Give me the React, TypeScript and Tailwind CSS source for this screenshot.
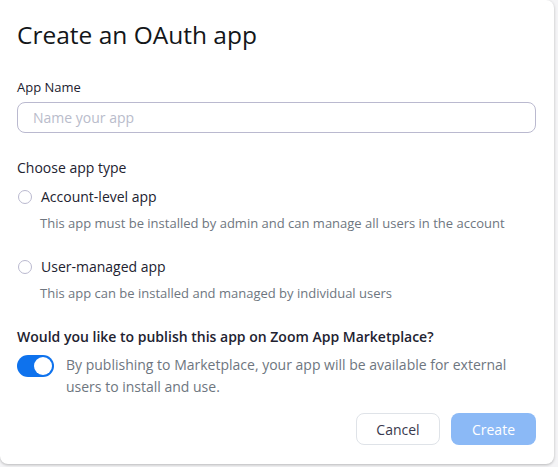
import React from "react";

export default function App() {
  return (
    <div className="w-[558px] h-[467px] bg-[#f4f4f6] overflow-hidden" style={{ fontFamily: '"Open Sans", "Noto Sans", sans-serif' }}>
      <div className="w-[554px] h-[464px] bg-white rounded-tr-lg rounded-b-lg shadow-[0_1px_3px_rgba(0,0,0,0.25)] pl-[17px] pr-[18px] pt-[18px] flex flex-col">
        <h1 className="text-[24.5px] leading-[34px] text-[#131619] font-normal">Create an OAuth app</h1>
        <div className="mt-[26px] text-[13px] leading-[18px] text-[#222230] font-medium">App Name</div>
        <div className="mt-[6px] h-[31px] border border-[#bab9cf] rounded-lg flex items-center px-[15px]">
          <span className="text-[14px] text-[#b9bccb]">Name your app</span>
        </div>
        <div className="mt-[25px] text-[14px] leading-[20px] text-[#222230]">Choose app type</div>
        <div className="mt-[9px] flex items-center gap-[9px]">
          <span className="w-[14px] h-[14px] rounded-full border border-[#bab9cf] ml-[1px]"></span>
          <span className="text-[14px] leading-[20px] text-[#222230]">Account-level app</span>
        </div>
        <div className="mt-[6px] ml-[23px] text-[13px] leading-[20px] text-[#6e7680]">This app must be installed by admin and can manage all users in the account</div>
        <div className="mt-[24px] flex items-center gap-[9px]">
          <span className="w-[14px] h-[14px] rounded-full border border-[#bab9cf] ml-[1px]"></span>
          <span className="text-[14px] leading-[20px] text-[#222230]">User-managed app</span>
        </div>
        <div className="mt-[6px] ml-[23px] text-[13px] leading-[20px] text-[#6e7680]">This app can be installed and managed by individual users</div>
        <div className="mt-[24px] text-[14px] leading-[20px] text-[#222230] font-semibold">Would you like to publish this app on Zoom App Marketplace?</div>
        <div className="mt-[7px] flex items-start gap-[12px]">
          <div className="mt-[1px] w-[37px] h-[22px] rounded-full bg-[#0e72ed] relative shrink-0">
            <div className="absolute right-[2px] top-[2px] w-[18px] h-[18px] rounded-full bg-white"></div>
          </div>
          <p className="max-w-[452px] text-[14px] leading-[22px] text-[#6e7680]">By publishing to Marketplace, your app will be available for external users to install and use.</p>
        </div>
        <div className="mt-[15px] flex justify-end gap-[11px]">
          <button className="w-[84px] h-[32px] rounded-lg border border-[#dfe3e8] bg-white text-[14px] text-[#39394d]">Cancel</button>
          <button className="w-[85px] h-[32px] rounded-lg bg-[#8bb9f6] text-[14px] text-white">Create</button>
        </div>
      </div>
    </div>
  );
}
